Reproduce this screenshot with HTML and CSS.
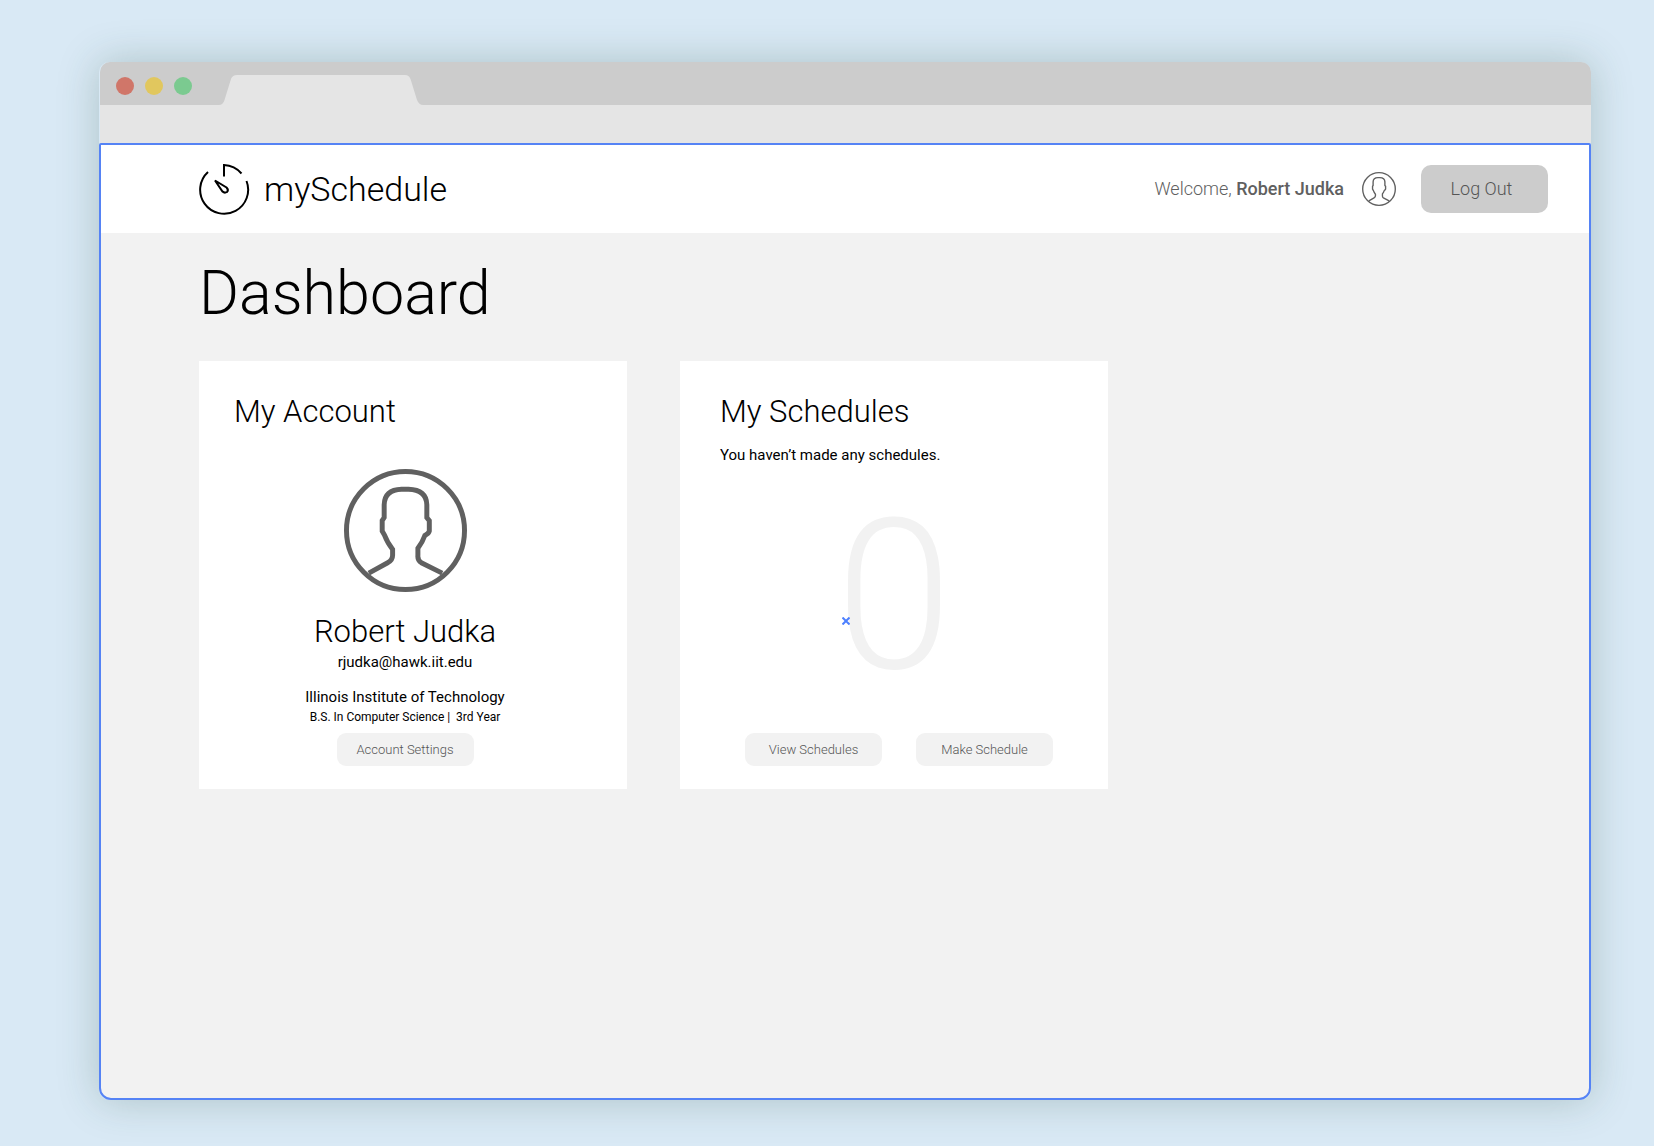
FILE: index.html
```html
<!DOCTYPE html>
<html lang="en">
<head>
<meta charset="utf-8">
<meta name="viewport" content="width=device-width, initial-scale=1">
<title>mySchedule – Dashboard</title>
<link rel="stylesheet" href="styles.css">
</head>
<body>
<svg class="symbols" aria-hidden="true">
  <symbol id="user" viewBox="0 0 124 124">
    <path d="M25 105 L44 94.500 Q49 92 49 87 V81 Q44 75 40.500 66 L38.500 62.500 V52 L40.500 49 V36 Q41 21 58 20.500 H65 Q83 21 83.500 36 V49 L86 52 V62.500 Q85.500 65 81.500 67 Q79 74 74.500 80 V87 Q74 92 78 94.500 L99 105"/>
    <circle cx="62" cy="62" r="59.500"/>
  </symbol>
</svg>
<div class="window">
  <div class="titlebar">
    <span class="light red"></span>
    <span class="light yellow"></span>
    <span class="light green"></span>
    <svg class="tab" width="204" height="30" viewBox="0 0 204 30" aria-hidden="true">
      <path d="M0 30 Q4 30 5.500 25 L12 4 Q13.500 0 18 0 H186 Q190 0 191.500 4 L198 25 Q200 30 204 30Z"/>
    </svg>
  </div>
  <div class="toolbar"></div>
  <div class="app">
    <header class="header">
      <a class="brand" href="#">
        <svg class="logo" width="52" height="52" viewBox="0 0 52 52" aria-hidden="true">
          <path d="M26 13.500 V2 A24.500 24.500 0 0 1 43.500 10.500"/>
          <path d="M48.500 18 A24 24 0 1 1 10 9"/>
          <path class="hand" d="M17 17.500 L28.500 24.500 Q31 27 29 29 Q26.500 30.500 24.500 28.500Z"/>
        </svg>
        <span>mySchedule</span>
      </a>
      <div class="session">
        <p class="welcome">Welcome, <strong>Robert Judka</strong></p>
        <svg class="user small" width="34" height="34" aria-hidden="true"><use href="#user"/></svg>
        <button class="logout" type="button">Log Out</button>
      </div>
    </header>
    <main class="main">
      <h1>Dashboard</h1>
      <div class="cards">
        <section class="card account">
          <h2>My Account</h2>
          <svg class="user large" width="123" height="123" aria-hidden="true"><use href="#user"/></svg>
          <p class="name">Robert Judka</p>
          <p class="email">rjudka@hawk.iit.edu</p>
          <p class="school">Illinois Institute of Technology</p>
          <p class="degree">B.S. In Computer Science |&nbsp; 3rd Year</p>
          <div class="actions"><button type="button">Account Settings</button></div>
        </section>
        <section class="card schedules">
          <h2>My Schedules</h2>
          <p class="note">You haven’t made any schedules.</p>
          <p class="count">0</p>
          <svg class="marker" width="8" height="8" viewBox="0 0 8 8" aria-hidden="true"><path d="M.500 .500 L7.500 7.500 M7.500 .500 L.500 7.500"/></svg>
          <div class="actions">
            <button type="button">View Schedules</button>
            <button type="button">Make Schedule</button>
          </div>
        </section>
      </div>
    </main>
  </div>
</div>
</body>
</html>
```
FILE: styles.css
```css
* { box-sizing: border-box; }

body {
  margin: 0;
  min-height: 100vh;
  display: flex;
  padding: 62px 63px 46px 99px;
  background: #d9e9f5;
  color: #000;
  font-family: Roboto, "Liberation Sans", sans-serif;
  font-weight: 300;
}

h1, h2, p { margin: 0; font-weight: 300; }

button {
  border: 0;
  font: inherit;
  color: #555;
  cursor: pointer;
}

.symbols { position: absolute; width: 0; height: 0; }

/* Browser frame */
.window {
  flex: 1;
  display: flex;
  flex-direction: column;
  border-radius: 10px;
  box-shadow: 0 0 40px rgba(40, 80, 60, .25);
}

.titlebar {
  display: flex;
  align-items: center;
  gap: 11px;
  height: 43px;
  margin-left: 1px;
  padding: 4px 16px 0;
  border-radius: 10px 10px 0 0;
  background: #ccc;
}

.light { width: 18px; height: 18px; border-radius: 50%; }
.red { background: #d07669; }
.yellow { background: #e1c75e; }
.green { background: #7bca90; }

.tab { align-self: flex-end; margin-left: 16px; fill: #e5e5e5; }

.toolbar { height: 38px; margin-left: 1px; background: #e5e5e5; }

.app {
  flex: 1;
  overflow: hidden;
  border: 2px solid #5583f5;
  border-radius: 2px 2px 12px 12px;
  background: #f2f2f2;
}

/* Page header */
.header {
  display: flex;
  align-items: center;
  justify-content: space-between;
  height: 88px;
  padding: 0 41px 1px 97px;
  background: #fff;
}

.brand {
  display: flex;
  align-items: center;
  gap: 14px;
  color: #000;
  font-size: 34px;
  text-decoration: none;
}

.logo { fill: none; stroke: #000; stroke-width: 2; }

.session { display: flex; align-items: center; color: #606060; }
.welcome { font-size: 18px; }
.welcome strong { font-weight: 500; }

.user { fill: none; stroke: #606060; stroke-width: 5; }
.user.small { margin: 0 25px 0 18px; }

.logout {
  width: 127px;
  height: 48px;
  padding: 0 6px 0 0;
  border-radius: 10px;
  background: #ccc;
  font-size: 18px;
}

/* Dashboard */
.main { padding: 25px 98px 34px; }

h1 { font-size: 61px; line-height: 70px; }

.cards { display: flex; flex-wrap: wrap; gap: 53px; margin-top: 33px; }

.card {
  display: flex;
  flex-direction: column;
  width: 428px;
  min-height: 428px;
  padding-top: 33px;
  padding-bottom: 23px;
  background: #fff;
  font-size: 15px;
  line-height: 18px;
}

.card p:not(.name, .count) { font-weight: 400; }

h2, .name { font-size: 31px; line-height: 36px; }

.account { padding-left: 35px; padding-right: 51px; text-align: center; }
.account h2 { text-align: left; }
.user.large { align-self: center; margin: 39px 0 22px; }
.email { margin-top: 3px; }
.school { margin-top: 17px; }
.degree { margin-top: 4px; font-size: 12px; line-height: 14px; }

.schedules { position: relative; padding-left: 40px; padding-right: 30px; }
.note { margin-top: 16px; }

.count {
  margin-top: 22px;
  padding-right: 10px;
  color: #f2f2f2;
  font-size: 210px;
  line-height: 220px;
  text-align: center;
}

.marker {
  position: absolute;
  left: 162px;
  top: 256px;
  fill: none;
  stroke: #4d80ff;
  stroke-width: 2;
}

.actions {
  display: flex;
  justify-content: center;
  gap: 34px;
  margin-top: auto;
}

.actions button {
  width: 137px;
  height: 33px;
  padding: 0;
  border-radius: 9px;
  background: #f2f2f2;
  font-size: 13px;
}
```
